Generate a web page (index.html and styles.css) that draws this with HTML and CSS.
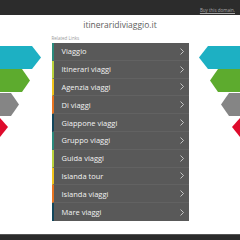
FILE: index.html
```html
<!DOCTYPE html>
<html lang="it">
<head>
<meta charset="utf-8">
<title>itineraridiviaggio.it</title>
<link rel="stylesheet" href="styles.css">
</head>
<body>
<header class="topbar"><a class="buy" href="#">Buy this domain.</a></header>
<main class="page">
  <div class="deco deco-left">
    <svg class="arrows" width="51" height="92" viewBox="0 0 51 92">
      <polygon fill="#1db0c3" points="0,0 32,0 41,11.5 32,23 0,23"/>
      <polygon fill="#5dab2e" points="0,23 22,23 30,34.5 22,46 0,46"/>
      <polygon fill="#858585" points="0,47 11,47 19,58.5 11,70 0,70"/>
      <polygon fill="#de0b2c" points="0,72 0,72 8,81 0,91"/>
    </svg>
  </div>
  <div class="center">
    <h1 class="title">itineraridiviaggio.it</h1>
    <p class="related">Related Links</p>
    <ul class="links">
      <li class="c1"><span>Viaggio</span><svg class="chev" viewBox="0 0 4 7"><polyline points="0.5,0.5 3.5,3.5 0.5,6.5"/></svg></li>
      <li class="c2"><span>Itinerari viaggi</span><svg class="chev" viewBox="0 0 4 7"><polyline points="0.5,0.5 3.5,3.5 0.5,6.5"/></svg></li>
      <li class="c3"><span>Agenzia viaggi</span><svg class="chev" viewBox="0 0 4 7"><polyline points="0.5,0.5 3.5,3.5 0.5,6.5"/></svg></li>
      <li class="c4"><span>Di viaggi</span><svg class="chev" viewBox="0 0 4 7"><polyline points="0.5,0.5 3.5,3.5 0.5,6.5"/></svg></li>
      <li class="c5"><span>Giappone viaggi</span><svg class="chev" viewBox="0 0 4 7"><polyline points="0.5,0.5 3.5,3.5 0.5,6.5"/></svg></li>
      <li class="c1"><span>Gruppo viaggi</span><svg class="chev" viewBox="0 0 4 7"><polyline points="0.5,0.5 3.5,3.5 0.5,6.5"/></svg></li>
      <li class="c2"><span>Guida viaggi</span><svg class="chev" viewBox="0 0 4 7"><polyline points="0.5,0.5 3.5,3.5 0.5,6.5"/></svg></li>
      <li class="c3"><span>Islanda tour</span><svg class="chev" viewBox="0 0 4 7"><polyline points="0.5,0.5 3.5,3.5 0.5,6.5"/></svg></li>
      <li class="c4"><span>Islanda viaggi</span><svg class="chev" viewBox="0 0 4 7"><polyline points="0.5,0.5 3.5,3.5 0.5,6.5"/></svg></li>
      <li class="c5"><span>Mare viaggi</span><svg class="chev" viewBox="0 0 4 7"><polyline points="0.5,0.5 3.5,3.5 0.5,6.5"/></svg></li>
    </ul>
  </div>
  <div class="deco deco-right">
    <svg class="arrows mirror" width="51" height="92" viewBox="0 0 51 92">
      <polygon fill="#1db0c3" points="0,0 32,0 41,11.5 32,23 0,23"/>
      <polygon fill="#5dab2e" points="0,23 22,23 30,34.5 22,46 0,46"/>
      <polygon fill="#858585" points="0,47 11,47 19,58.5 11,70 0,70"/>
      <polygon fill="#de0b2c" points="0,72 0,72 8,81 0,91"/>
    </svg>
  </div>
</main>
<footer class="bottombar"></footer>
</body>
</html>
```
FILE: styles.css
```css
html, body {
  margin: 0;
  padding: 0;
}
body {
  min-height: 240px;
  display: flex;
  flex-direction: column;
  background: #ffffff;
  font-family: "Open Sans", "Liberation Sans", sans-serif;
}
.topbar {
  height: 15px;
  background: #2c2c2c;
  display: flex;
  justify-content: flex-end;
  align-items: flex-end;
  padding-right: 5px;
}
.buy {
  color: #a9a9a9;
  font-size: 4.5px;
  line-height: 7px;
  text-decoration: underline;
  margin-bottom: 1px;
}
.page {
  display: grid;
  grid-template-columns: 1fr 137px 1fr;
}
.deco {
  padding-top: 31px;
}
.arrows {
  display: block;
}
.deco-right .arrows {
  margin-left: auto;
}
.mirror {
  transform: scaleX(-1);
}
.center {
  display: flex;
  flex-direction: column;
}
.title {
  margin: 0;
  font-size: 8.5px;
  line-height: 20px;
  font-weight: 400;
  color: #5e5e5e;
  text-align: center;
}
.related {
  margin: 0 0 2px;
  font-size: 4.5px;
  line-height: 6px;
  color: #9a9a9a;
}
.links {
  list-style: none;
  margin: 0;
  padding: 0;
  background: #595959;
}
.links li {
  height: 17.8px;
  box-sizing: border-box;
  display: flex;
  align-items: center;
  justify-content: space-between;
  padding: 0 5px 0 8px;
  border-left: 2px solid #2a8a7c;
  border-bottom: 1px solid #626262;
  color: #f2f2f2;
  font-size: 7.5px;
}
.links li:last-child {
  border-bottom: none;
}
.links li.c1 { border-left-color: #2a8a7c; }
.links li.c2 { border-left-color: #b9d23b; }
.links li.c3 { border-left-color: #f1c41b; }
.links li.c4 { border-left-color: #e8731f; }
.links li.c5 { border-left-color: #13465b; }
.chev {
  width: 4px;
  height: 7px;
  fill: none;
  stroke: #dddddd;
  stroke-width: 0.8;
}
.bottombar {
  margin-top: auto;
  height: 5px;
  background: #2b2b2b;
  border-top: 1px solid #555555;
}
```
